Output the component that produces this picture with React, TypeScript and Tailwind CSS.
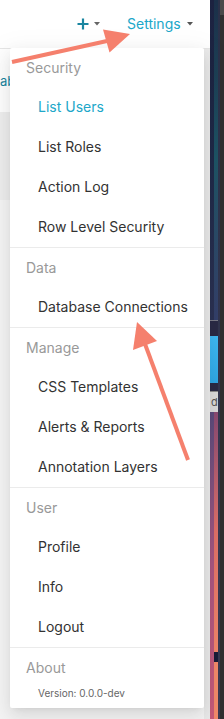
import React from "react";

const Caret = ({ color }: { color: string }) => (
  <svg width="6" height="4" viewBox="0 0 6 4" className="block">
    <polygon points="0,0 6,0 3,3.6" fill={color} />
  </svg>
);

type Group = { title: string; items: string[]; activeIndex?: number };

const groups: Group[] = [
  { title: "Security", items: ["List Users", "List Roles", "Action Log", "Row Level Security"], activeIndex: 0 },
  { title: "Data", items: ["Database Connections"] },
  { title: "Manage", items: ["CSS Templates", "Alerts & Reports", "Annotation Layers"] },
  { title: "User", items: ["Profile", "Info", "Logout"] },
];

export default function App() {
  return (
    <div
      className="relative flex h-[719px] w-[224px] overflow-hidden bg-white"
      style={{ fontFamily: "Inter, 'Noto Sans', 'Liberation Sans', sans-serif" }}
    >
      {/* page */}
      <div className="flex w-[210px] flex-col">
        <div className="flex h-[49px] items-center border-b border-[#e6e6e6] bg-white pl-[77px]">
          <svg width="12" height="12" viewBox="0 0 12 12" className="block">
            <path d="M6 0.5V11.5M0.5 6H11.5" stroke="#1a85a0" strokeWidth="2.2" />
          </svg>
          <div className="ml-[5px]">
            <Caret color="#666666" />
          </div>
          <span className="ml-[27px] text-[14px] leading-[20px] text-[#20a7c9]">Settings</span>
          <div className="ml-[6px]">
            <Caret color="#555555" />
          </div>
        </div>
        <div className="flex flex-1">
          <div className="flex flex-1 flex-col">
            <div className="flex h-[63px] items-center bg-white">
              <span className="text-[13px] leading-[20px] text-[#1a85a0]">ab</span>
            </div>
            <div className="h-[88px] bg-[#efefef]" />
            <div className="flex-1 bg-[#f6f6f6]" />
          </div>
          <div className="w-[6px] bg-[#ebebeb]" />
        </div>
      </div>

      {/* background window strip */}
      <div className="flex w-[14px]">
        <div className="flex w-[8px] flex-col">
          <div className="flex h-[320px]">
            <div className="w-[4px] bg-gradient-to-b from-[#1c2240] via-[#1f2a48] to-[#2b3252]" />
            <div className="w-[4px] bg-gradient-to-b from-[#1b2f48] via-[#1e5566] to-[#34406a]" />
          </div>
          <div className="h-[1px] bg-[#7a7a86]" />
          <div className="h-[15px] bg-[#2a2a45]" />
          <div className="h-[47px] bg-gradient-to-b from-[#3fb8f2] to-[#2fa6e4]" />
          <div className="h-[8px] bg-[#2a2a45]" />
          <div className="h-[1px] bg-[#8a8a8a]" />
          <div className="flex h-[20px] items-center overflow-hidden bg-[#d9d9d9] pl-[1px] text-[11px] leading-[14px] text-[#555]">
            d
          </div>
          <div className="flex flex-1">
            <div className="w-[4px] bg-gradient-to-b from-[#5a4a7a] via-[#a85580] to-[#c85a78]" />
            <div className="flex w-[4px] flex-col">
              <div className="h-[240px] bg-gradient-to-b from-[#8a4a72] via-[#e07068] to-[#f0866a]" />
              <div className="h-[10px] bg-[#1a1d38]" />
              <div className="flex-1 bg-[#f28a6a]" />
            </div>
          </div>
        </div>
        <div className="w-[2px] bg-gradient-to-b from-[#2a3048] to-[#3a3a52]" />
        <div className="flex w-[4px] flex-col">
          <div className="h-[15px] bg-[#4a4a4a]" />
          <div className="flex-1 bg-[#303030]" />
        </div>
      </div>

      {/* dropdown menu */}
      <div className="absolute left-[10px] top-[48px] w-[194px] rounded-[2px] bg-white shadow-[0_3px_6px_-4px_rgba(0,0,0,0.12),0_6px_16px_0_rgba(0,0,0,0.08),0_9px_28px_8px_rgba(0,0,0,0.05)]">
        {groups.map((g) => (
          <div key={g.title}>
            <div className="flex h-[39px] items-center pl-[16px] text-[14px] leading-[20px] text-[#999999]">
              {g.title}
            </div>
            {g.items.map((it, i) => (
              <div
                key={it}
                className={
                  i === g.activeIndex
                    ? "flex h-[40px] items-center pl-[28px] text-[14px] leading-[20px] text-[#20a7c9]"
                    : "flex h-[40px] items-center pl-[28px] text-[14px] leading-[20px] text-[#323232]"
                }
              >
                {it}
              </div>
            ))}
            <div className="h-[1px] bg-[#ebebeb]" />
          </div>
        ))}
        <div className="flex h-[39px] items-center pl-[16px] text-[14px] leading-[20px] text-[#999999]">About</div>
        <div className="pb-[8px] pl-[28px] text-[10px] leading-[13px] text-[#666666]">Version: 0.0.0-dev</div>
      </div>

      {/* annotation arrows */}
      <svg className="pointer-events-none absolute left-0 top-0" width="224" height="719" viewBox="0 0 224 719">
        <line x1="12" y1="62" x2="107" y2="41" stroke="#f5806d" strokeWidth="4" />
        <polygon points="130,34 103,29.5 109.5,52.5" fill="#f5806d" />
        <line x1="145" y1="344" x2="188" y2="460" stroke="#f5806d" strokeWidth="4" />
        <polygon points="137,322 133,350 157,341" fill="#f5806d" />
      </svg>
    </div>
  );
}
